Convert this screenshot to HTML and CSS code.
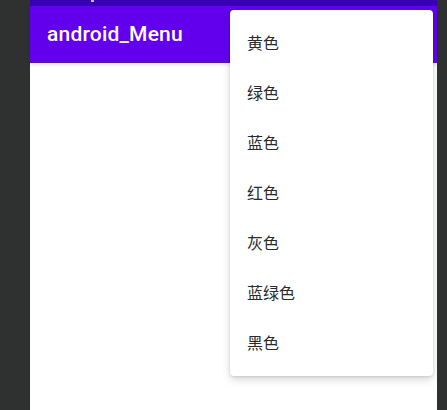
FILE: index.html
```html
<!DOCTYPE html>
<html>
<head>
<meta charset="utf-8">
<link rel="stylesheet" href="styles.css">
</head>
<body>
<div class="frame">
  <div class="side side-left"></div>
  <div class="screen">
    <div class="status"><span class="dot"></span></div>
    <div class="appbar"><span class="title">android_Menu</span></div>
    <div class="content"></div>
    <ul class="menu">
      <li class="item">黄色</li>
      <li class="item">绿色</li>
      <li class="item">蓝色</li>
      <li class="item">红色</li>
      <li class="item">灰色</li>
      <li class="item">蓝绿色</li>
      <li class="item">黑色</li>
    </ul>
  </div>
  <div class="side side-right"></div>
</div>
</body>
</html>
```

FILE: styles.css
```css
html, body {
  margin: 0;
  padding: 0;
  background: #2f3130;
  width: 447px;
  height: 410px;
  overflow: hidden;
}
.frame {
  display: flex;
  height: 410px;
}
.side-left { width: 30px; flex: none; }
.side-right { width: 10px; flex: none; }
.screen {
  position: relative;
  width: 407px;
  flex: none;
  background: #ffffff;
  display: flex;
  flex-direction: column;
}
.status {
  height: 6px;
  background: #3700b3;
  position: relative;
}
.dot {
  position: absolute;
  left: 61px;
  top: 0;
  width: 3px;
  height: 2px;
  background: #c8c0f0;
}
.appbar {
  height: 57px;
  background: #6200ee;
  display: flex;
  align-items: center;
  padding-left: 17px;
  box-shadow: 0 2px 3px rgba(0,0,0,0.12);
}
.title {
  color: #ffffff;
  font-family: Roboto, "Noto Sans", sans-serif;
  font-weight: 500;
  font-size: 21px;
  letter-spacing: 0.2px;
  margin-top: -1px;
}
.content { flex: 1; }
.menu {
  position: absolute;
  left: 200px;
  top: 10px;
  width: 203px;
  margin: 0;
  padding: 7px 0 9px;
  list-style: none;
  background: #ffffff;
  border-radius: 4px;
  box-shadow: 0 4px 8px rgba(0,0,0,0.14), 0 1px 3px rgba(0,0,0,0.12);
}
.item {
  height: 50px;
  display: flex;
  align-items: center;
  padding-left: 17px;
  font-family: "Noto Sans CJK SC", sans-serif;
  font-size: 16px;
  color: #2a2a2a;
}
```
